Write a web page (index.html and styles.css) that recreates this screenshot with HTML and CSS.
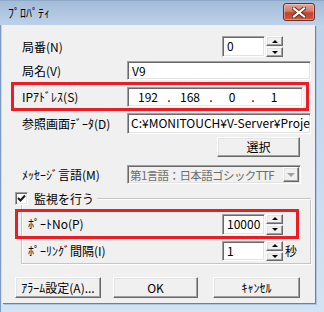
FILE: index.html
```html
<!DOCTYPE html>
<html lang="ja">
<head>
<meta charset="utf-8">
<link rel="stylesheet" href="styles.css">
</head>
<body>
<div class="window">
  <div class="titlebar">
    <span class="title">ﾌﾟﾛﾊﾟﾃｨ</span>
    <div class="close">
      <svg width="14" height="11" viewBox="0 0 14 11"><path d="M2 1.5 L12 9.5 M12 1.5 L2 9.5" stroke="#5a2a22" stroke-width="4" stroke-linecap="square"/><path d="M2 1.5 L12 9.5 M12 1.5 L2 9.5" stroke="#fff" stroke-width="2.2" stroke-linecap="square"/></svg>
    </div>
  </div>
  <div class="frame">
    <div class="client">
      <div class="row r1">
        <span class="label wide">局番(N)</span>
        <div class="spin h21">
          <div class="field sf">0</div>
          <div class="sbtns"><div class="sbtn"><i class="up"></i></div><div class="sbtn"><i class="dn"></i></div></div>
        </div>
      </div>
      <div class="row r2">
        <span class="label">局名(V)</span>
        <div class="field long h19">V9</div>
      </div>
      <div class="mark ip-mark">
        <span class="label">IPｱﾄﾞﾚｽ(S)</span>
        <div class="field ip">
          <span class="oct">192</span><span class="dot">.</span><span class="oct">168</span><span class="dot">.</span><span class="oct">0</span><span class="dot">.</span><span class="oct">1</span>
        </div>
      </div>
      <div class="row r4">
        <span class="label">参照画面ﾃﾞｰﾀ(D)</span>
        <div class="field long h21 clip">C:¥MONITOUCH¥V-Server¥Proje</div>
      </div>
      <div class="row r5">
        <div class="btn sel">選択</div>
      </div>
      <div class="row r6">
        <span class="label">ﾒｯｾｰｼﾞ言語(M)</span>
        <div class="combo">
          <span class="ctext">第1言語：日本語ゴシックTTF</span>
          <div class="cbtn"><i class="cdn"></i></div>
        </div>
      </div>
      <div class="ghead">
        <div class="check">
          <svg width="9" height="9" viewBox="0 0 9 9"><path d="M1 4 L3.5 6.5 L8 1.5" fill="none" stroke="#1a1a1a" stroke-width="2"/></svg>
        </div>
        <span class="gtitle">監視を行う</span>
        <div class="gline"></div>
      </div>
      <div class="group">
        <div class="mark port-mark">
          <span class="label wide2">ﾎﾟｰﾄNo(P)</span>
          <div class="spin h21">
            <div class="field sf">10000</div>
            <div class="sbtns"><div class="sbtn"><i class="up"></i></div><div class="sbtn"><i class="dn"></i></div></div>
          </div>
        </div>
        <div class="row poll">
          <span class="label wide2">ﾎﾟｰﾘﾝｸﾞ間隔(I)</span>
          <div class="spin h20">
            <div class="field sf">1</div>
            <div class="sbtns"><div class="sbtn"><i class="up"></i></div><div class="sbtn"><i class="dn"></i></div></div>
          </div>
          <span class="sec">秒</span>
        </div>
      </div>
      <div class="row btns">
        <div class="btn alarm">ｱﾗｰﾑ設定(A)...</div>
        <div class="btn ok">OK</div>
        <div class="btn cancel">ｷｬﾝｾﾙ</div>
      </div>
    </div>
  </div>
</div>
</body>
</html>
```

FILE: styles.css
```css
* { box-sizing: border-box; }
html, body { margin: 0; padding: 0; background: #dbe7f4; }
body {
  font-family: "Noto Sans CJK JP", "Liberation Sans", sans-serif;
  font-size: 12px;
  color: #000;
}
.window {
  width: 324px;
  height: 312px;
  display: flex;
  flex-direction: column;
  background: linear-gradient(#bcd2ea, #d3e3f3);
  overflow: hidden;
}
.titlebar {
  height: 25px;
  flex: none;
  display: flex;
  align-items: center;
  background: linear-gradient(#a4bcd9, #bcd1e9);
  border-top: 1px solid #8ea8c8;
  padding-left: 8px;
}
.title {
  font-size: 12px;
  line-height: 12px;
  color: #000;
  margin-top: -1px;
}
.close {
  margin-left: auto;
  margin-right: 9px;
  margin-top: -2px;
  width: 32px;
  height: 18px;
  border: 1px solid #6e2b22;
  border-radius: 3px;
  background: linear-gradient(#e3a597 0%, #d77b69 45%, #c0432f 55%, #c95a3e 100%);
  box-shadow: inset 0 0 0 1px rgba(255,255,255,0.35);
  display: flex;
  align-items: center;
  justify-content: center;
}
.frame {
  flex: 1;
  display: flex;
  padding-left: 2px;
  border-left: 1px solid #7d9bc1;
}
.client {
  width: 313px;
  height: 278px;
  margin-left: -1px;
  background: #f0f0f0;
  padding-top: 11px;
  box-shadow: 1px 1px 0 #3d8ed6, 2px 2px 0 #a9c6e4;
}
.row { display: flex; align-items: center; }
.label { flex: none; width: 105px; white-space: nowrap; line-height: 14px; }
.label.wide { width: 200px; }
.label.wide2 { width: 194px; }
.r1 { height: 21px; padding-left: 20px; }
.r2 { height: 19px; margin-top: 4px; padding-left: 20px; }
.r4 { height: 21px; margin-top: 2px; padding-left: 20px; }
.r5 { height: 20px; margin-top: 3px; }
.r6 { height: 19px; margin-top: 8px; padding-left: 20px; }

.field {
  background: #fff;
  border-top: 1px solid #a0a0a0;
  border-left: 1px solid #a0a0a0;
  border-right: 1px solid #fff;
  border-bottom: 1px solid #fff;
  box-shadow: inset 1px 1px 0 #696969, inset -1px -1px 0 #e3e3e3;
  padding: 1px 3px 0 4px;
  line-height: 15px;
  white-space: nowrap;
  overflow: hidden;
}
.h19 { height: 19px; }
.h21 { height: 21px; }
.h20 { height: 20px; }
.long { width: 184px; }
.clip { padding-left: 3px; }

.mark {
  border: 3px solid #ec1c24;
  display: flex;
  align-items: center;
}
.ip-mark {
  margin-top: 2px;
  margin-left: 9px;
  width: 298px;
  height: 29px;
  padding-left: 8px;
}
.ip {
  width: 176px;
  height: 20px;
  display: flex;
  padding: 1px 0 0 1px;
}
.oct { width: 38px; text-align: center; }
.dot { width: 4px; text-align: center; }

.spin { display: flex; flex: none; }
.spin .sf { width: 43px; height: 100%; }
.sbtns {
  margin-left: 1px;
  width: 17px;
  display: flex;
  flex-direction: column;
  justify-content: space-between;
}
.sbtn {
  height: 10px;
  background: #f0f0f0;
  border-top: 1px solid #fff;
  border-left: 1px solid #fff;
  border-right: 1px solid #696969;
  border-bottom: 1px solid #696969;
  box-shadow: inset -1px -1px 0 #a0a0a0, inset 1px 1px 0 #e3e3e3;
  display: flex;
  align-items: center;
  justify-content: center;
}
.h20 .sbtn { height: 9.5px; }
.up, .dn, .cdn { display: block; width: 0; height: 0; }
.up { border-left: 3px solid transparent; border-right: 3px solid transparent; border-bottom: 3px solid #000; }
.dn { border-left: 3px solid transparent; border-right: 3px solid transparent; border-top: 3px solid #000; }

.btn {
  flex: none;
  height: 20px;
  background: #f0f0f0;
  border-top: 1px solid #fff;
  border-left: 1px solid #fff;
  border-right: 1px solid #696969;
  border-bottom: 1px solid #696969;
  box-shadow: inset -1px -1px 0 #a0a0a0, inset 1px 1px 0 #e3e3e3;
  display: flex;
  align-items: center;
  justify-content: center;
  line-height: 14px;
  white-space: nowrap;
}
.sel { margin-left: 215px; width: 83px; }

.combo {
  width: 174px;
  height: 19px;
  display: flex;
  align-items: center;
  background: #f0f0f0;
  border-top: 1px solid #a0a0a0;
  border-left: 1px solid #a0a0a0;
  border-right: 1px solid #fff;
  border-bottom: 1px solid #fff;
  box-shadow: inset 1px 1px 0 #696969, inset -1px -1px 0 #e3e3e3;
  padding-left: 2px;
}
.ctext {
  color: #6d6d6d;
  white-space: nowrap;
  flex: 1;
  min-width: 0;
  line-height: 14px;
  font-size: 11.5px;
  letter-spacing: -0.6px;
}
.cbtn {
  flex: none;
  width: 16px;
  height: 15px;
  margin-right: 1px;
  background: #f0f0f0;
  border-top: 1px solid #fff;
  border-left: 1px solid #fff;
  border-right: 1px solid #696969;
  border-bottom: 1px solid #696969;
  box-shadow: inset -1px -1px 0 #a0a0a0, inset 1px 1px 0 #e3e3e3;
  display: flex;
  align-items: center;
  justify-content: center;
}
.cdn { border-left: 4px solid transparent; border-right: 4px solid transparent; border-top: 4px solid #a0a0a0; }

.ghead {
  height: 13px;
  margin-top: 8px;
  padding-left: 13px;
  display: flex;
  align-items: center;
}
.check {
  position: relative;
  z-index: 1;
  flex: none;
  width: 13px;
  height: 13px;
  background: #fff;
  border-top: 1px solid #a0a0a0;
  border-left: 1px solid #a0a0a0;
  border-right: 1px solid #fff;
  border-bottom: 1px solid #fff;
  box-shadow: inset 1px 1px 0 #696969, inset -1px -1px 0 #e3e3e3;
  display: flex;
  align-items: center;
  justify-content: center;
}
.gtitle { margin-left: 6px; line-height: 14px; white-space: nowrap; }
.gline {
  flex: 1;
  margin-left: 3px;
  margin-right: 4px;
  height: 2px;
  border-top: 1px solid #c5c5c5;
  border-bottom: 1px solid #fff;
}
.group {
  margin-top: -6px;
  margin-left: 19px;
  width: 290px;
  height: 65px;
  border: 1px solid #c5c5c5;
  border-top: none;
  box-shadow: 1px 1px 0 #fff, inset 1px 0 0 #fff;
  padding-top: 10px;
}
.port-mark {
  margin-left: -7px;
  width: 284px;
  height: 30px;
  padding-left: 10px;
}
.poll { height: 20px; margin-top: 2px; padding-left: 6px; }
.sec { margin-left: 2px; line-height: 14px; }

.btns { height: 21px; margin-top: 13px; }
.btns .btn { height: 21px; }
.alarm { margin-left: 13px; width: 86px; }
.ok { margin-left: 12px; width: 85px; }
.cancel { margin-left: 15px; width: 87px; }
```
